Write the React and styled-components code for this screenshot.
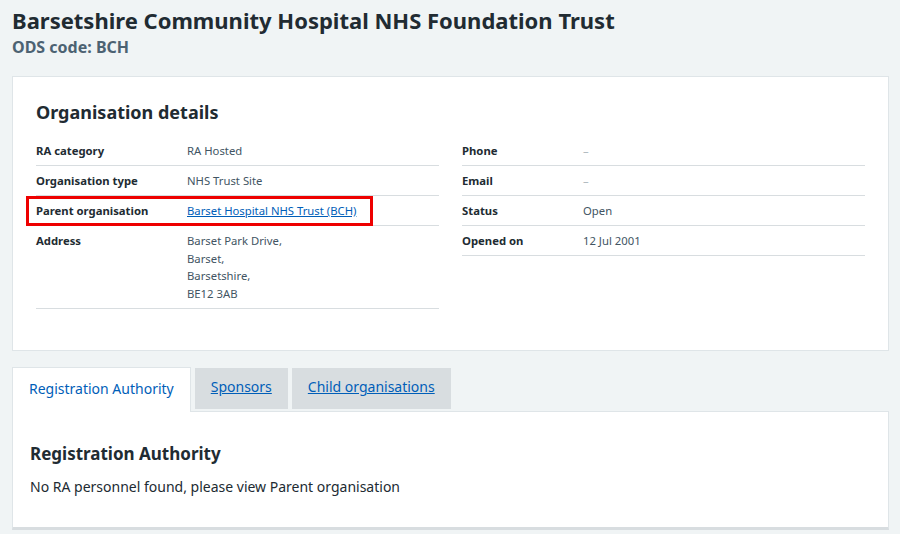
import React from 'react';
import styled, { createGlobalStyle } from 'styled-components';

const GlobalStyle = createGlobalStyle`
  html, body {
    margin: 0;
    padding: 0;
    background-color: #f0f4f5;
  }
  body {
    font-family: "Noto Sans", "Open Sans", Arial, sans-serif;
    color: #212b32;
  }
`;

const Page = styled.main`
  padding: 4px 11px 0 12px;
`;

const Title = styled.h1`
  margin: 0;
  font-size: 22px;
  line-height: 32px;
  font-weight: 700;
  color: #212b32;
`;

const Caption = styled.p`
  margin: 0 0 18px;
  font-size: 16px;
  line-height: 22px;
  font-weight: 700;
  color: #4c6272;
`;

const Card = styled.section`
  background-color: white;
  border: 1px solid #dfe5e8;
  padding: 22px 23px 41px;
  margin-bottom: 16px;
`;

const CardHeading = styled.h2`
  margin: 0 0 11px;
  font-size: 18px;
  line-height: 26px;
  font-weight: 700;
`;

const Columns = styled.div`
  display: grid;
  grid-template-columns: 1fr 1fr;
  column-gap: 23px;
  align-items: start;
`;

const SummaryList = styled.dl`
  margin: 0;
  position: relative;
`;

const Row = styled.div`
  display: grid;
  grid-template-columns: ${props => props.keyWidth}px 1fr;
  border-bottom: 1px solid #d8dde0;
  padding: 6px 0 6px;
  font-size: 11.3px;
  line-height: 17px;
`;

const Key = styled.dt`
  font-weight: 700;
  color: #212b32;
`;

const Value = styled.dd`
  margin: 0;
  color: #425563;
`;

const Address = styled.span`
  display: block;
  line-height: 17.6px;
`;

const Dash = styled.span`
  color: #aeb7bd;
`;

const Link = styled.a`
  color: #005eb8;
  text-decoration: underline;
  cursor: pointer;
`;

const Highlight = styled.div`
  position: absolute;
  left: -10px;
  top: 60px;
  width: 341px;
  height: 24px;
  border: 3px solid #ee0000;
  pointer-events: none;
`;

const TabList = styled.nav`
  display: flex;
  align-items: flex-end;
  gap: 4px;
`;

const Tab = styled.a`
  display: block;
  font-size: 14px;
  line-height: 20px;
  cursor: pointer;
  color: #005eb8;
  ${props => props.active ? `
    background-color: white;
    border: 1px solid #dfe5e8;
    border-bottom: none;
    padding: 11px 16px 13px;
    margin-bottom: -1px;
    text-decoration: none;
  ` : `
    background-color: #d8dde0;
    padding: 9px 16px 12px;
    margin-bottom: 2px;
    text-decoration: underline;
  `}
`;

const Panel = styled.section`
  background-color: white;
  border: 1px solid #dfe5e8;
  border-bottom: 3px solid #d8dde0;
  padding: 30px 17px 30px;
`;

const PanelHeading = styled.h2`
  margin: 0 0 11px;
  font-size: 17px;
  line-height: 24px;
  font-weight: 700;
`;

const PanelText = styled.p`
  margin: 0;
  font-size: 14px;
  line-height: 20px;
`;

const leftRows = [
  { key: 'RA category', value: 'RA Hosted' },
  { key: 'Organisation type', value: 'NHS Trust Site' },
  { key: 'Parent organisation', value: <Link>Barset Hospital NHS Trust (BCH)</Link> },
  {
    key: 'Address',
    value: <Address>Barset Park Drive,<br />Barset,<br />Barsetshire,<br />BE12 3AB</Address>,
  },
];

const rightRows = [
  { key: 'Phone', value: <Dash>–</Dash> },
  { key: 'Email', value: <Dash>–</Dash> },
  { key: 'Status', value: 'Open' },
  { key: 'Opened on', value: '12 Jul 2001' },
];

export default function App() {
  return (
    <>
      <GlobalStyle />
      <Page>
        <Title>Barsetshire Community Hospital NHS Foundation Trust</Title>
        <Caption>ODS code: BCH</Caption>

        <Card>
          <CardHeading>Organisation details</CardHeading>
          <Columns>
            <SummaryList>
              {leftRows.map(row => (
                <Row key={row.key} keyWidth={151}>
                  <Key>{row.key}</Key>
                  <Value>{row.value}</Value>
                </Row>
              ))}
              <Highlight />
            </SummaryList>
            <SummaryList>
              {rightRows.map(row => (
                <Row key={row.key} keyWidth={121}>
                  <Key>{row.key}</Key>
                  <Value>{row.value}</Value>
                </Row>
              ))}
            </SummaryList>
          </Columns>
        </Card>

        <TabList>
          <Tab active>Registration Authority</Tab>
          <Tab>Sponsors</Tab>
          <Tab>Child organisations</Tab>
        </TabList>
        <Panel>
          <PanelHeading>Registration Authority</PanelHeading>
          <PanelText>No RA personnel found, please view Parent organisation</PanelText>
        </Panel>
      </Page>
    </>
  );
}
